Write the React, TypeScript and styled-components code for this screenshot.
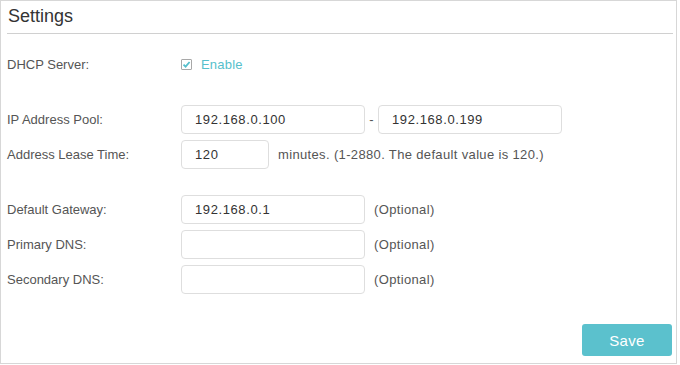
import styled, { createGlobalStyle } from "styled-components";

const GlobalStyle = createGlobalStyle`
  html, body {
    margin: 0;
    padding: 0;
    background: #ffffff;
  }
  body {
    font-family: "Liberation Sans", Arial, sans-serif;
  }
`;

const Panel = styled.div`
  width: 677px;
  height: 364px;
  box-sizing: border-box;
  border: 1px solid #d7d7d7;
  padding: 0 3px 7px 6px;
  display: flex;
  flex-direction: column;
`;

const Title = styled.div`
  height: 32px;
  border-bottom: 1px solid #d0d0d0;
  font-size: 18px;
  color: #333333;
  line-height: 30px;
  padding-left: 1px;
`;

const Form = styled.div`
  display: flex;
  flex-direction: column;
  padding-top: 16px;
  gap: 26px;
`;

const Group = styled.div`
  display: flex;
  flex-direction: column;
  gap: 6px;
`;

const Row = styled.div`
  display: flex;
  align-items: center;
  height: 29px;
`;

const Label = styled.div`
  width: 174px;
  flex-shrink: 0;
  font-size: 13px;
  color: #555555;
`;

const Field = styled.div`
  display: flex;
  align-items: center;
  height: 100%;
`;

const Input = styled.input<{ $w: number }>`
  box-sizing: border-box;
  width: ${(p) => p.$w}px;
  height: 29px;
  border: 1px solid #dedede;
  border-radius: 4px;
  padding: 0 0 0 13px;
  font-family: "Liberation Sans", Arial, sans-serif;
  font-size: 13px;
  letter-spacing: 0.6px;
  color: #333333;
  background: #fff;
  outline: none;
`;

const Dash = styled.span`
  font-size: 13px;
  color: #555;
  width: 13px;
  text-align: center;
`;

const Hint = styled.span`
  font-size: 13px;
  letter-spacing: 0.35px;
  color: #555555;
  margin-left: 9px;
`;

const Check = styled.label`
  display: flex;
  align-items: center;
  gap: 9px;
  font-size: 13px;
  letter-spacing: 0.2px;
  color: #56bfcc;
  cursor: pointer;
`;

const Box = styled.span`
  width: 11px;
  height: 11px;
  box-sizing: border-box;
  border: 1px solid #a8a8a8;
  border-radius: 1px;
  display: flex;
  align-items: center;
  justify-content: center;
`;

const Footer = styled.div`
  margin-top: auto;
  display: flex;
  justify-content: flex-end;
  padding-right: 1px;
`;

const SaveButton = styled.button`
  width: 90px;
  height: 32px;
  border: none;
  border-radius: 3px;
  background: #5bc1cd;
  color: #ffffff;
  font-family: "Liberation Sans", Arial, sans-serif;
  font-size: 15px;
  letter-spacing: 0.3px;
  cursor: pointer;
`;

export default function App() {
  return (
    <>
      <GlobalStyle />
      <Panel>
        <Title>Settings</Title>
        <Form>
          <Group>
            <Row>
              <Label>DHCP Server:</Label>
              <Check>
                <Box>
                  <svg width="9" height="9" viewBox="0 0 9 9">
                    <path d="M1.5 4.6 L3.6 6.6 L7.6 2" fill="none" stroke="#56bfcc" strokeWidth="1.8" />
                  </svg>
                </Box>
                Enable
              </Check>
            </Row>
          </Group>
          <Group>
            <Row>
              <Label>IP Address Pool:</Label>
              <Field>
                <Input $w={184} defaultValue="192.168.0.100" />
                <Dash>-</Dash>
                <Input $w={184} defaultValue="192.168.0.199" />
              </Field>
            </Row>
            <Row>
              <Label>Address Lease Time:</Label>
              <Field>
                <Input $w={88} defaultValue="120" />
                <Hint>minutes. (1-2880. The default value is 120.)</Hint>
              </Field>
            </Row>
          </Group>
          <Group>
            <Row>
              <Label>Default Gateway:</Label>
              <Field>
                <Input $w={184} defaultValue="192.168.0.1" />
                <Hint>(Optional)</Hint>
              </Field>
            </Row>
            <Row>
              <Label>Primary DNS:</Label>
              <Field>
                <Input $w={184} defaultValue="" />
                <Hint>(Optional)</Hint>
              </Field>
            </Row>
            <Row>
              <Label>Secondary DNS:</Label>
              <Field>
                <Input $w={184} defaultValue="" />
                <Hint>(Optional)</Hint>
              </Field>
            </Row>
          </Group>
        </Form>
        <Footer>
          <SaveButton>Save</SaveButton>
        </Footer>
      </Panel>
    </>
  );
}
